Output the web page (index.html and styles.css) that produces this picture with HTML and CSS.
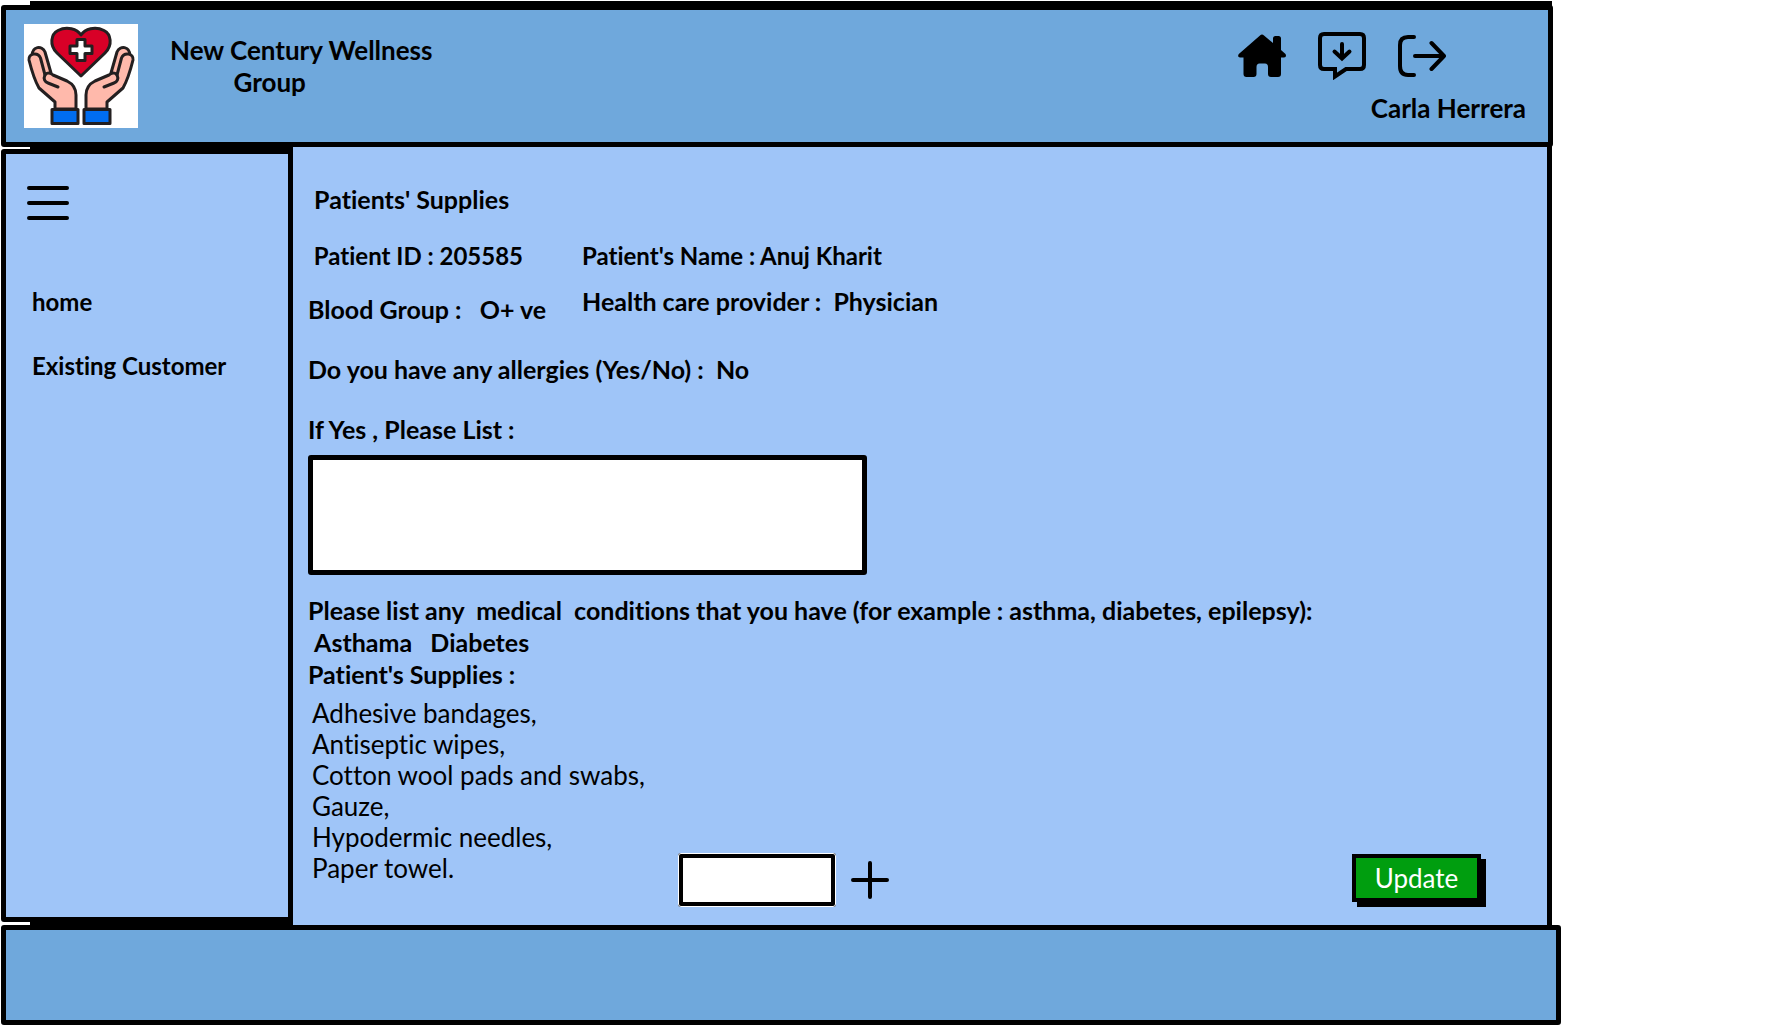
FILE: index.html
```html
<!DOCTYPE html>
<html lang="en">
<head>
<meta charset="utf-8">
<title>New Century Wellness Group - Patients' Supplies</title>
<link rel="stylesheet" href="styles.css">
</head>
<body>
<div class="page">
  <header class="header">
    <svg class="logo" viewBox="0 0 114 104" role="img" aria-label="Hands holding a heart">
      <rect width="114" height="104" fill="#fff"/>
      <g stroke="#231f20" stroke-width="3" stroke-linejoin="round" stroke-linecap="round">
        <path d="M57 52L33 29C25 21 27 10 34 6.500C43 2 53 5 57 11C61 5 71 2 80 6.500C87 10 89 21 81 29Z" fill="#d80027"/>
        <path d="M53 15.500h8v6.500h7v7.500h-7v7h-8v-7h-7v-7.500h7z" fill="#fff"/>
        <g id="hand">
          <path d="M8 32C8 22 18 21 21 28L27 49L22 55L12 45Z" fill="#ffb9ab"/>
          <path d="M5 36C4 29 14 28 16.500 34L21 51C23 48 27 49 29 51L43 57C49 60 52 65 52 71V85H31V78L15 64C11 57 8 48 5 36Z" fill="#ffb9ab"/>
          <path d="M21 51C19 55 21 58 24 59L34 63" fill="none"/>
          <path d="M28 85.500h26v14h-26z" fill="#006df0"/>
        </g>
        <use href="#hand" transform="matrix(-1 0 0 1 114 0)"/>
      </g>
    </svg>
    <h1 class="brand">New Century Wellness<br>Group          </h1>
    <div class="account">
      <nav class="tools" aria-label="Account">
        <a href="#home" aria-label="Home">
          <svg width="48" height="48" viewBox="0 0 48 48"><path d="M22 3.500Q24 1.500 26 3.500L35 11V6.500Q35 4 37.500 4H40.500Q43 4 43 6.500V18L47.500 22Q49 25 46 25.500H43V42Q43 45 40 45H33Q30 45 30 42V35Q30 31.500 27 31.500H21.500Q18.500 31.500 18.500 35V42Q18.500 45 15.500 45H8.500Q5.500 45 5.500 42V25.500H2Q-1 25 .8 22Z"/></svg>
        </a>
        <a href="#inbox" aria-label="Messages">
          <svg width="48" height="48" viewBox="0 0 48 48" fill="none" stroke="#000" stroke-width="4" stroke-linecap="round"><path d="M6 2H42Q46 2 46 6V33Q46 37 42 37H28L17 44.500V37H6Q2 37 2 33V6Q2 2 6 2Z"/><path d="M24 12V26M16.500 19.500L24 26.500L31.500 19.500"/></svg>
        </a>
        <a href="#logout" aria-label="Log out">
          <svg width="48" height="48" viewBox="0 0 48 48" fill="none" stroke="#000" stroke-width="4" stroke-linecap="round" stroke-linejoin="round"><path d="M16 5H10Q2 5 2 13V34Q2 43 10 43H16M17 24H46M33.500 11L46 24L33.500 37"/></svg>
        </a>
      </nav>
      <span class="user">Carla Herrera</span>
    </div>
  </header>

  <div class="body">
    <aside class="sidebar">
      <button class="menu" type="button" aria-label="Menu">
        <svg width="42" height="36" viewBox="0 0 42 36" stroke="#000" stroke-width="4" stroke-linecap="round"><path d="M2 3H40M2 18H40M2 33H40"/></svg>
      </button>
      <nav class="links">
        <a href="#home">home</a>
        <a href="#existing">Existing Customer</a>
      </nav>
    </aside>

    <main class="main">
      <h2 class="line"> Patients' Supplies</h2>
      <div class="patient">
        <div class="facts">
          <p class="line identity"> Patient ID : 205585</p>
          <p class="line">Blood Group :   O+ ve</p>
        </div>
        <div class="facts facts-close">
          <p class="line identity">Patient's Name : Anuj Kharit</p>
          <p class="line">Health care provider :  Physician</p>
        </div>
      </div>
      <p class="line question">Do you have any allergies (Yes/No) :  No</p>
      <label class="line question" for="allergies">If Yes , Please List :</label>
      <textarea class="allergies" id="allergies"></textarea>
      <p class="line">Please list any  medical  conditions that you have (for example : asthma, diabetes, epilepsy):</p>
      <p class="line"> Asthama   Diabetes</p>
      <h3 class="line">Patient's Supplies :</h3>
      <div class="supplies">
        <ul class="items">
          <li>Adhesive bandages,</li>
          <li>Antiseptic wipes,</li>
          <li>Cotton wool pads and swabs,</li>
          <li>Gauze,</li>
          <li>Hypodermic needles,</li>
          <li>Paper towel.</li>
        </ul>
        <div class="add">
          <input class="supply" type="text" aria-label="New supply">
          <button class="plus" type="button" aria-label="Add supply">
            <svg width="40" height="40" viewBox="0 0 40 40" stroke="#000" stroke-width="4" stroke-linecap="round"><path d="M3 20H37M20 3V37"/></svg>
          </button>
        </div>
        <button class="update" type="button">Update</button>
      </div>
    </main>
  </div>

  <footer class="footer"></footer>
</div>
</body>
</html>
```
FILE: styles.css
```css
* {
  box-sizing: border-box;
}

body {
  margin: 0;
  background: #fff;
  color: #000;
  font: 700 24px/32px Lato, sans-serif;
  font-variant-ligatures: none;
}

h1, h2, h3, p, ul {
  margin: 0;
  padding: 0;
  font-size: inherit;
  font-weight: inherit;
}

a {
  color: inherit;
  text-decoration: none;
}

button {
  padding: 0;
  border: 0;
  background: none;
  color: inherit;
  font: inherit;
  cursor: pointer;
}

svg {
  display: block;
}

/* The black sheet behind the panels shows as the outer frame line. */
.page {
  display: flex;
  flex-direction: column;
  width: calc(100% - 205px);
  min-height: 100vh;
  padding: 5px 0 1px 1px;
  background: linear-gradient(#000, #000) 30px 1px / calc(100% - 39px) calc(100% - 10px) no-repeat;
}

.header {
  display: flex;
  align-items: flex-start;
  margin-right: 8px;
  padding: 14px 22px 14px 18px;
  border: 5px solid #000;
  border-radius: 3px;
  background: #6fa8dc;
  font-size: 26px;
}

.logo {
  width: 114px;
  height: 104px;
}

.brand {
  margin: 10px 0 0 32px;
  text-align: center;
  white-space: pre;
}

.account {
  display: flex;
  flex-direction: column;
  align-items: flex-end;
  gap: 12px;
  margin: 8px 0 0 auto;
}

.tools {
  display: flex;
  gap: 32px;
  margin-right: 80px;
}

.body {
  display: flex;
  flex: 1;
  margin-right: 9px;
}

.sidebar {
  width: 292px;
  margin: 2px 0 3px;
  padding: 31px 21px;
  border: 5px solid #000;
  border-radius: 3px;
  background: #9fc5f8;
}

.menu {
  display: block;
}

.links {
  display: flex;
  flex-direction: column;
  gap: 32px;
  margin-top: 65px;
  padding-left: 5px;
}

.main {
  flex: 1;
  padding: 36px 0 16px 15px;
  border-right: 5px solid #000;
  background: #9fc5f8;
  font-size: 25px;
}

.line {
  display: block;
  white-space: pre-wrap;
}

.patient {
  display: flex;
  margin-top: 25px;
}

.facts {
  display: flex;
  flex-direction: column;
  gap: 21px;
  width: 274px;
}

.facts-close {
  gap: 13px;
  width: auto;
}

.identity {
  font-size: 24px;
}

.question {
  margin-top: 28px;
}

.allergies {
  display: block;
  width: 559px;
  height: 120px;
  margin: 10px 0 19px;
  padding: 8px;
  border: 5px solid #000;
  border-radius: 3px;
  background: #fff;
  font: inherit;
  resize: none;
}

.supplies {
  display: flex;
  align-items: flex-end;
  margin-top: 8px;
}

.items {
  width: 370px;
  padding: 0 0 23px 4px;
  font-size: 26px;
  font-weight: 400;
  line-height: 31px;
  list-style: none;
}

.add {
  display: flex;
  align-items: center;
  gap: 14px;
}

.supply {
  width: 158px;
  height: 54px;
  padding: 0 8px;
  border: 5px solid #000;
  border-radius: 3px;
  outline: 1px solid #fff;
  outline-offset: -1px;
  background: #fff;
  font: inherit;
}

.update {
  width: 129px;
  height: 48px;
  margin: 0 66px 5px auto;
  border: 4px solid #000;
  background: #009e0f;
  box-shadow: 5px 5px 0 #000;
  color: #fff;
  font-size: 26px;
  font-weight: 400;
}

.footer {
  height: 100px;
  border: 5px solid #000;
  border-radius: 3px;
  background: #6fa8dc;
}
```
